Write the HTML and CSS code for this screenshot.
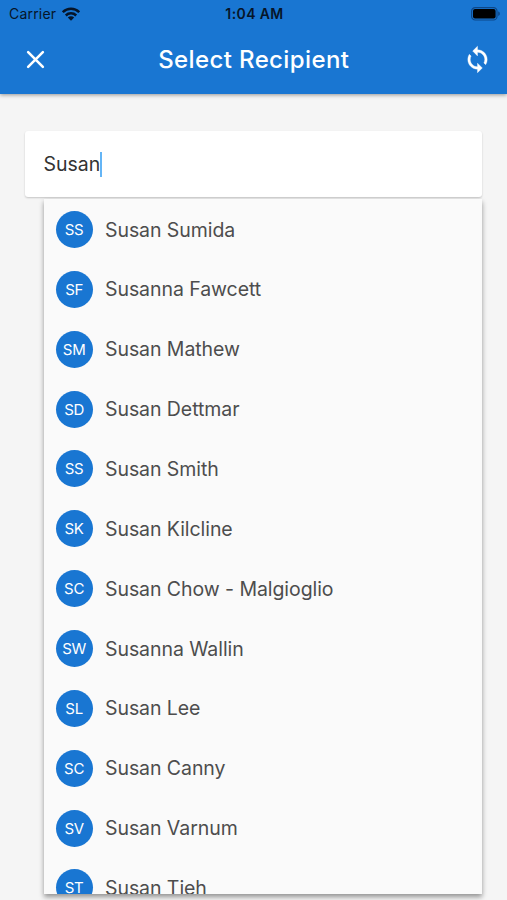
FILE: index.html
```html
<!DOCTYPE html>
<html lang="en">
<head>
<meta charset="utf-8">
<title>Select Recipient</title>
<link rel="stylesheet" href="styles.css">
</head>
<body>
<header class="app-bar">
  <div class="status">
    <div class="carrier"><span>Carrier</span>
      <svg class="wifi" viewBox="0 0 18 14"><g fill="none" stroke="#061529" stroke-width="2.5"><path d="M.8 5.2a11.6 11.6 0 0 1 16.4 0"/><path d="M3.8 8.5a7.4 7.4 0 0 1 10.4 0"/></g><path fill="#061529" d="M9 13.8 5.8 10.5a4.6 4.6 0 0 1 6.4 0z"/></svg>
    </div>
    <span class="time">1:04 AM</span>
    <svg class="battery" viewBox="0 0 30 14"><rect x=".6" y=".6" width="25.4" height="12.4" rx="3.6" fill="none" stroke="#0d4788" stroke-width="1.2"/><rect x="2" y="2" width="22.6" height="9.6" rx="2" fill="#000"/><path fill="#0d4788" d="M27.2 4.6c2.2.6 2.2 3.8 0 4.4z"/></svg>
  </div>
  <div class="toolbar">
    <svg class="icon" viewBox="0 0 24 24"><path d="M5.9 5.9l12.2 12.2M18.1 5.9L5.9 18.1" fill="none" stroke="#fff" stroke-width="2.1" stroke-linecap="round"/></svg>
    <h1 class="title">Select Recipient</h1>
    <svg class="icon" viewBox="0 0 24 24"><path fill="#fff" stroke="#fff" stroke-width=".3" d="M12 4V1L8 5l4 4V6c3.31 0 6 2.69 6 6 0 1.01-.25 1.97-.7 2.8l1.46 1.46C19.54 15.03 20 13.57 20 12c0-4.42-3.58-8-8-8zm0 14c-3.31 0-6-2.69-6-6 0-1.01.25-1.97.7-2.8L5.24 7.74C4.46 8.97 4 10.43 4 12c0 4.42 3.58 8 8 8v3l4-4-4-4v3z"/></svg>
  </div>
</header>
<main class="content">
  <div class="field"><span>Susan</span><i class="caret"></i></div>
  <ul class="results">
    <li class="row"><span class="avatar">SS</span><span class="name">Susan Sumida</span></li>
    <li class="row"><span class="avatar">SF</span><span class="name">Susanna Fawcett</span></li>
    <li class="row"><span class="avatar">SM</span><span class="name">Susan Mathew</span></li>
    <li class="row"><span class="avatar">SD</span><span class="name">Susan Dettmar</span></li>
    <li class="row"><span class="avatar">SS</span><span class="name">Susan Smith</span></li>
    <li class="row"><span class="avatar">SK</span><span class="name">Susan Kilcline</span></li>
    <li class="row"><span class="avatar">SC</span><span class="name">Susan Chow - Malgioglio</span></li>
    <li class="row"><span class="avatar">SW</span><span class="name">Susanna Wallin</span></li>
    <li class="row"><span class="avatar">SL</span><span class="name">Susan Lee</span></li>
    <li class="row"><span class="avatar">SC</span><span class="name">Susan Canny</span></li>
    <li class="row"><span class="avatar">SV</span><span class="name">Susan Varnum</span></li>
    <li class="row"><span class="avatar">ST</span><span class="name">Susan Tieh</span></li>
  </ul>
</main>
</body>
</html>
```
FILE: styles.css
```css
* { box-sizing: border-box; }
body {
  margin: 0;
  height: 900px;
  overflow: hidden;
  background: #f5f5f5;
  font-family: Inter, sans-serif;
}
.app-bar {
  height: 94px;
  background: #1976d2;
  box-shadow: 0 1px 4px rgba(0, 0, 0, .4);
}
.status {
  display: grid;
  grid-template-columns: 1fr auto 1fr;
  align-items: center;
  height: 27px;
  padding: 0 6px 0 9px;
  color: #061529;
  font-size: 14px;
}
.carrier { display: flex; align-items: center; gap: 6px; letter-spacing: .2px; }
.wifi { width: 18px; height: 14px; }
.time { font-size: 14px; font-weight: 600; letter-spacing: .4px; margin-right: 1px; }
.battery { width: 30px; height: 14px; justify-self: end; }
.toolbar {
  display: flex;
  align-items: center;
  justify-content: space-between;
  height: 65px;
  padding: 0 15px 0 20.5px;
}
.icon { width: 29px; height: 29px; }
.title {
  margin: 0 5px 0 0;
  color: #fff;
  font-size: 24px;
  font-weight: 500;
  letter-spacing: .38px;
}
.content { padding: 37px 25px 0; }
.field {
  display: flex;
  align-items: center;
  height: 66px;
  padding-left: 18.5px;
  background: #fff;
  border-radius: 3px;
  box-shadow: 0 1px 2px rgba(0, 0, 0, .2);
  color: #333;
  font-size: 19.5px;
}
.caret { width: 2px; height: 25px; margin-left: -.5px; background: #64b5f6; }
.results {
  height: 695px;
  margin: 2px 0 0 19px;
  padding: .6px 0 0 12px;
  overflow: hidden;
  list-style: none;
  background: #fafafa;
  box-shadow: 0 3px 5px rgba(0, 0, 0, .4);
}
.row { display: flex; align-items: center; gap: 12px; height: 59.87px; }
.avatar {
  display: flex;
  align-items: center;
  justify-content: center;
  width: 37px;
  height: 37px;
  border-radius: 50%;
  background: #1976d2;
  color: #fff;
  font-size: 15px;
  letter-spacing: -.3px;
  padding-right: .8px;
}
.name { color: #4d4d4d; font-size: 19.5px; letter-spacing: -.07px; white-space: nowrap; }
```
